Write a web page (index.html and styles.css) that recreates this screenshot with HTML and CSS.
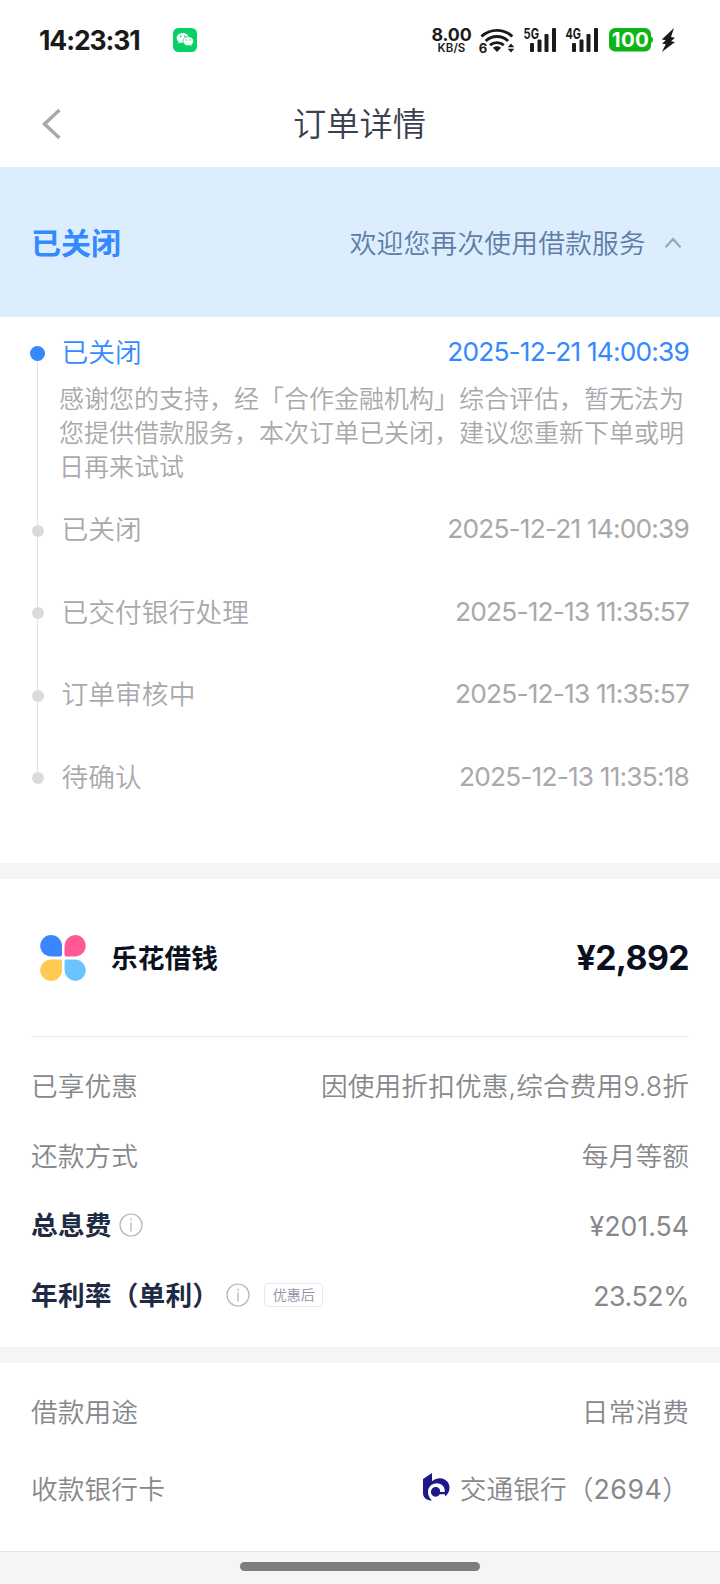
FILE: index.html
```html
<!DOCTYPE html>
<html lang="zh-CN">
<head>
<meta charset="utf-8">
<title>订单详情</title>
<link rel="stylesheet" href="styles.css">
</head>
<body>
<div class="status">
  <span class="clock">14:23:31</span>
  <svg class="wechat" width="24" height="24" viewBox="0 0 24 24">
    <rect width="24" height="24" rx="5.5" fill="#06d167"/>
    <path d="M9.800 4.900c-3.400 0-6.100 2.200-6.100 5 0 1.600.8 2.900 2.100 3.800l-.5 1.900 2.100-1.100c.8.2 1.600.3 2.400.3 3.300 0 6-2.200 6-4.900s-2.700-5-6-5z" fill="#fff"/>
    <path d="M15.300 8.700c-3 0-5.300 2-5.300 4.500s2.300 4.500 5.300 4.500c.7 0 1.400-.1 2-.3l1.800 1-.4-1.700c1.200-.8 1.900-2.100 1.900-3.500 0-2.500-2.300-4.500-5.300-4.500z" fill="#fff" stroke="#06d167" stroke-width=".7"/>
    <g fill="#06d167"><circle cx="7.700" cy="8.400" r=".8"/><circle cx="11.800" cy="8.400" r=".8"/><circle cx="13.500" cy="12" r=".7"/><circle cx="17" cy="12" r=".7"/></g>
  </svg>
  <div class="speed"><span class="speed-num">8.00</span><span class="speed-unit">KB/S</span></div>
  <svg class="wifi" width="36" height="26" viewBox="0 0 36 26">
    <g fill="none" stroke="#1a1a1a" stroke-width="2.900">
      <path d="M2.500 9.500C11 1.300 24.800 1.300 33.300 9.500"/>
      <path d="M6.700 14c6.200-6 16.200-6 22.400 0"/>
      <path d="M11 18.200c3.900-3.500 9.900-3.500 13.800 0"/>
    </g>
    <path d="M18 25l-4.200-4.200c2.300-2.200 6.100-2.200 8.400 0z" fill="#1a1a1a"/>
    <path d="M32 16.500l3.200 3.700h-6.400zM32 25.500l3.200-3.700h-6.400z" fill="#1a1a1a"/>
    <rect x="-1" y="15" width="9" height="11" fill="#fff"/>
    <text x="-.3" y="25.500" class="glyph-six">6</text>
  </svg>
  <svg class="sig" width="34" height="26" viewBox="0 0 34 26">
    <text x="-.5" y="11.600" class="net" textLength="15.500" lengthAdjust="spacingAndGlyphs">5G</text>
    <g fill="#1a1a1a"><rect x="6" y="16" width="4" height="9" rx="1"/><rect x="13.500" y="12.500" width="4" height="12.500" rx="1"/><rect x="20.500" y="7" width="4" height="18" rx="1"/><rect x="28" y="1" width="4" height="24" rx="1"/></g>
  </svg>
  <svg class="sig" width="34" height="26" viewBox="0 0 34 26">
    <text x="-.5" y="11.600" class="net" textLength="15.500" lengthAdjust="spacingAndGlyphs">4G</text>
    <g fill="#1a1a1a"><rect x="6" y="16" width="4" height="9" rx="1"/><rect x="13.500" y="12.500" width="4" height="12.500" rx="1"/><rect x="20.500" y="7" width="4" height="18" rx="1"/><rect x="28" y="1" width="4" height="24" rx="1"/></g>
  </svg>
  <svg class="battery" width="44" height="24" viewBox="0 0 44 24">
    <rect width="42" height="23.500" rx="6" fill="#0cb514"/><path d="M41.500 8q2.500 1 2.500 3.800t-2.500 3.800z" fill="#0cb514"/>
    <text x="2.800" y="19.300" class="pct" textLength="37">100</text>
  </svg>
  <svg class="bolt" width="14" height="24" viewBox="0 0 14 24"><path d="M13 0L.8 11.500l4 .8-3.800 3.200 3.800.7L.8 24 14 14l-4-.8 4-3.400-4-.8z" fill="#1a1a1a"/></svg>
</div>

<header class="nav">
  <svg class="back" width="20" height="32" viewBox="0 0 20 32"><path d="M17.500 2L2.500 16l15 14" fill="none" stroke="#a9a9a9" stroke-width="3.500"/></svg>
  <h1 class="nav-title">订单详情</h1>
</header>

<section class="banner">
  <strong class="banner-state">已关闭</strong>
  <span class="banner-msg">欢迎您再次使用借款服务</span>
  <svg class="caret" width="18" height="12" viewBox="0 0 18 12"><path d="M1.500 10.200L9 2.200l7.500 8" fill="none" stroke="#98a6b5" stroke-width="2.200"/></svg>
</section>

<section class="timeline">
  <div class="step step-active">
    <div class="rail"><i class="dot"></i><i class="line"></i></div>
    <div class="step-body">
      <div class="step-head"><span>已关闭</span><time>2025-12-21 14:00:39</time></div>
      <p class="step-note">感谢您的支持，经「合作金融机构」综合评估，暂无法为您提供借款服务，本次订单已关闭，建议您重新下单或明日再来试试</p>
    </div>
  </div>
  <div class="step">
    <div class="rail"><i class="dot"></i><i class="line"></i></div>
    <div class="step-body"><div class="step-head"><span>已关闭</span><time>2025-12-21 14:00:39</time></div></div>
  </div>
  <div class="step">
    <div class="rail"><i class="dot"></i><i class="line"></i></div>
    <div class="step-body"><div class="step-head"><span>已交付银行处理</span><time>2025-12-13 11:35:57</time></div></div>
  </div>
  <div class="step">
    <div class="rail"><i class="dot"></i><i class="line"></i></div>
    <div class="step-body"><div class="step-head"><span>订单审核中</span><time>2025-12-13 11:35:57</time></div></div>
  </div>
  <div class="step">
    <div class="rail"><i class="dot"></i></div>
    <div class="step-body"><div class="step-head"><span>待确认</span><time>2025-12-13 11:35:18</time></div></div>
  </div>
</section>

<section class="loan">
  <div class="product">
    <svg class="logo" width="46" height="46" viewBox="0 0 46 46">
      <path d="M11 0a11 11 0 0 1 11 11v8.500q0 2-2 2h-9a10.700 10.700 0 0 1 0-21.500z" fill="#3a86ff"/>
      <path d="M35 0a11 11 0 0 0-10.500 11v8.500q0 2 2 2H35A10.700 10.700 0 0 0 35 0z" fill="#ff5894"/>
      <path d="M11 46a11 11 0 0 0 11-11v-8.500q0-2-2-2h-9a10.700 10.700 0 0 0 0 21.500z" fill="#ffca54"/>
      <path d="M35 46a11 11 0 0 1-10.500-11v-8.500q0-2 2-2H35A10.700 10.700 0 0 1 35 46z" fill="#6ac5ff"/>
    </svg>
    <span class="product-name">乐花借钱</span>
    <span class="amount">¥2,892</span>
  </div>
  <div class="rows">
    <div class="row"><span>已享优惠</span><span class="value">因使用折扣优惠,综合费用9.8折</span></div>
    <div class="row"><span>还款方式</span><span class="value">每月等额</span></div>
    <div class="row"><span class="key">总息费</span>
      <svg class="info" width="24" height="24" viewBox="0 0 24 24"><circle cx="12" cy="12" r="11" fill="none" stroke="#b4b4b8" stroke-width="1.200"/><path d="M12 9.500v9M12 5.500v2" stroke="#b4b4b8" stroke-width="1.300"/></svg>
      <span class="value num">¥201.54</span></div>
    <div class="row"><span class="key">年利率（单利）</span>
      <svg class="info" width="24" height="24" viewBox="0 0 24 24"><circle cx="12" cy="12" r="11" fill="none" stroke="#b4b4b8" stroke-width="1.200"/><path d="M12 9.500v9M12 5.500v2" stroke="#b4b4b8" stroke-width="1.300"/></svg>
      <span class="tag">优惠后</span>
      <span class="value num pct-value">23.52%</span></div>
  </div>
</section>

<section class="account">
  <div class="row"><span>借款用途</span><span class="value">日常消费</span></div>
  <div class="row row-bank"><span>收款银行卡</span>
    <span class="value bank">
      <svg class="bank-logo" width="28" height="28" viewBox="0 0 28 28">
        <path d="M0 6L9 0v8.300C12 5.500 16 4.800 19 5.500c4.500 1 7.500 4.800 7.500 9.200 0 3.700-1.800 6.800-4.500 8.800v-2.200h-5.300A4.700 4.700 0 1 1 17.300 19h4.400c.6-5-3-8.700-7.700-8.700C8.600 10.300 5 14.300 5 19c0 3.500 1.500 6.500 4 8.500C4 27.500 0 25 0 20z" fill="#1d1a8c"/>
        <circle cx="12.800" cy="18.300" r="4.200" fill="#1d1a8c"/>
      </svg>
      <span>交通银行（<span class="digits">2694</span>）</span>
    </span>
  </div>
</section>

<footer class="gesture"><i class="pill"></i></footer>
</body>
</html>
```

FILE: styles.css
```css
* { box-sizing: border-box; }
body {
  margin: 0;
  width: 720px;
  height: 1584px;
  display: flex;
  flex-direction: column;
  overflow: hidden;
  background: #fff;
  color: #86888c;
  font-family: Inter, "Noto Sans CJK SC", sans-serif;
  font-size: 26.700px;
  font-weight: 350;
  letter-spacing: .1px;
  line-height: 36px;
}
svg { display: block; flex: none; overflow: visible; letter-spacing: 0; }
i { display: block; }

.status {
  height: 80px;
  padding-left: 39px;
  display: flex;
  align-items: center;
  color: #1a1a1a;
}
.clock { width: 134px; font-size: 26.500px; font-weight: 700; letter-spacing: -1.100px; white-space: nowrap; }
.speed { width: 40px; margin-left: 234.500px; display: flex; flex-direction: column; align-items: center; font-weight: 700; padding-top: 1px; }
.speed-num { font-size: 17.800px; line-height: 14px; letter-spacing: -.1px; }
.speed-unit { font-size: 11.500px; line-height: 12px; font-weight: 600; }
.wifi { margin-left: 7px; }
.sig { margin-left: 9px; }
.sig + .sig { margin-left: 8px; }
.battery { margin-left: 9px; }
.bolt { margin-left: 8px; }
.glyph-six { font: 700 13px Inter, sans-serif; fill: #1a1a1a; }
.net { font: 700 14.500px Inter, sans-serif; fill: #1a1a1a; }
.pct { font: 700 20.500px Inter, sans-serif; fill: #fff; }

.nav {
  height: 87px;
  padding-left: 42px;
  display: flex;
  align-items: center;
}
.nav-title {
  flex: 1;
  margin: 0 63px 0 0;
  text-align: center;
  font-size: 33.300px;
  font-weight: 350;
  letter-spacing: 0;
  color: #3b404e;
}

.banner {
  height: 150px;
  padding: 1px 38px 0 31px;
  display: flex;
  align-items: center;
  background: #dceefe;
}
.banner-state { font-size: 30px; letter-spacing: 0; color: #3489ff; font-weight: 700; }
.banner-msg { margin-left: auto; font-size: 26.700px; letter-spacing: .25px; line-height: 34px; padding-top: 1px; color: #607ca6; }
.caret { margin: 1px 0 0 18px; }

.timeline {
  height: 546px;
  padding: 29px 31px 0;
  color: #a9a9ab;
}
.step { display: flex; height: 82.500px; }
.step-active { height: 178.500px; }
.rail { width: 13px; display: flex; flex-direction: column; align-items: center; }
.dot { width: 12px; height: 12px; border-radius: 50%; background: #dadada; flex: none; }
.step-active .dot { width: 15px; height: 15px; background: #3489ff; }
.line { flex: 1; width: 1px; background: #e2e2e2; }
.step-body { flex: 1; margin: -13.500px 0 0 17.500px; }
.step-active .step-body { margin-top: -12px; }
.step-head { display: flex; justify-content: space-between; }
.step-active .step-head { color: #3489ff; }
.step-head time { letter-spacing: -.82px; font-size: 26.300px; font-weight: 380; }
.step-note { width: 630px; margin: 12px -10px 0 -2.500px; font-size: 25px; letter-spacing: 0; line-height: 34px; }

.loan {
  height: 484px;
  padding: 0 31px;
  border-top: 16px solid #f4f6f5;
}
.product { height: 157.500px; padding: 1px 0 0 9px; display: flex; align-items: center; border-bottom: 1px solid #e6e6e6; color: #0b1020; }
.product-name { margin-left: 25px; font-weight: 700; }
.amount { margin-left: auto; font-size: 33.800px; font-weight: 700; letter-spacing: -.6px; }
.rows { padding-top: 15px; }
.row { height: 69.600px; display: flex; align-items: center; }
.key { color: #1f2a44; font-weight: 700; letter-spacing: .2px; }
.info { margin-left: 7px; }
.tag {
  margin-left: 14px;
  width: 59px;
  height: 24px;
  border: 1px solid #e6e8ee;
  border-radius: 4px;
  font-size: 14px;
  letter-spacing: 0;
  line-height: 22px;
  text-align: center;
  color: #8c92a2;
}
.value { margin-left: auto; }
.num { letter-spacing: 0; font-weight: 400; padding-top: 1px; }
.pct-value { letter-spacing: -.4px; }
.digits { letter-spacing: .5px; font-weight: 400; }

.account {
  height: 204px;
  padding: 14.500px 31px 0;
  border-top: 16px solid #f4f6f5;
}
.row-bank { height: 84px; }
.bank { display: flex; align-items: center; gap: 9px; }
.bank-logo { margin-top: -5px; }

.gesture { height: 33px; padding-top: 10px; background: #f4f6f5; border-top: 1px solid #e3e5e4; }
.pill { width: 240px; height: 8.500px; margin: 0 auto; border-radius: 5px; background: #7b7e7c; }
```
